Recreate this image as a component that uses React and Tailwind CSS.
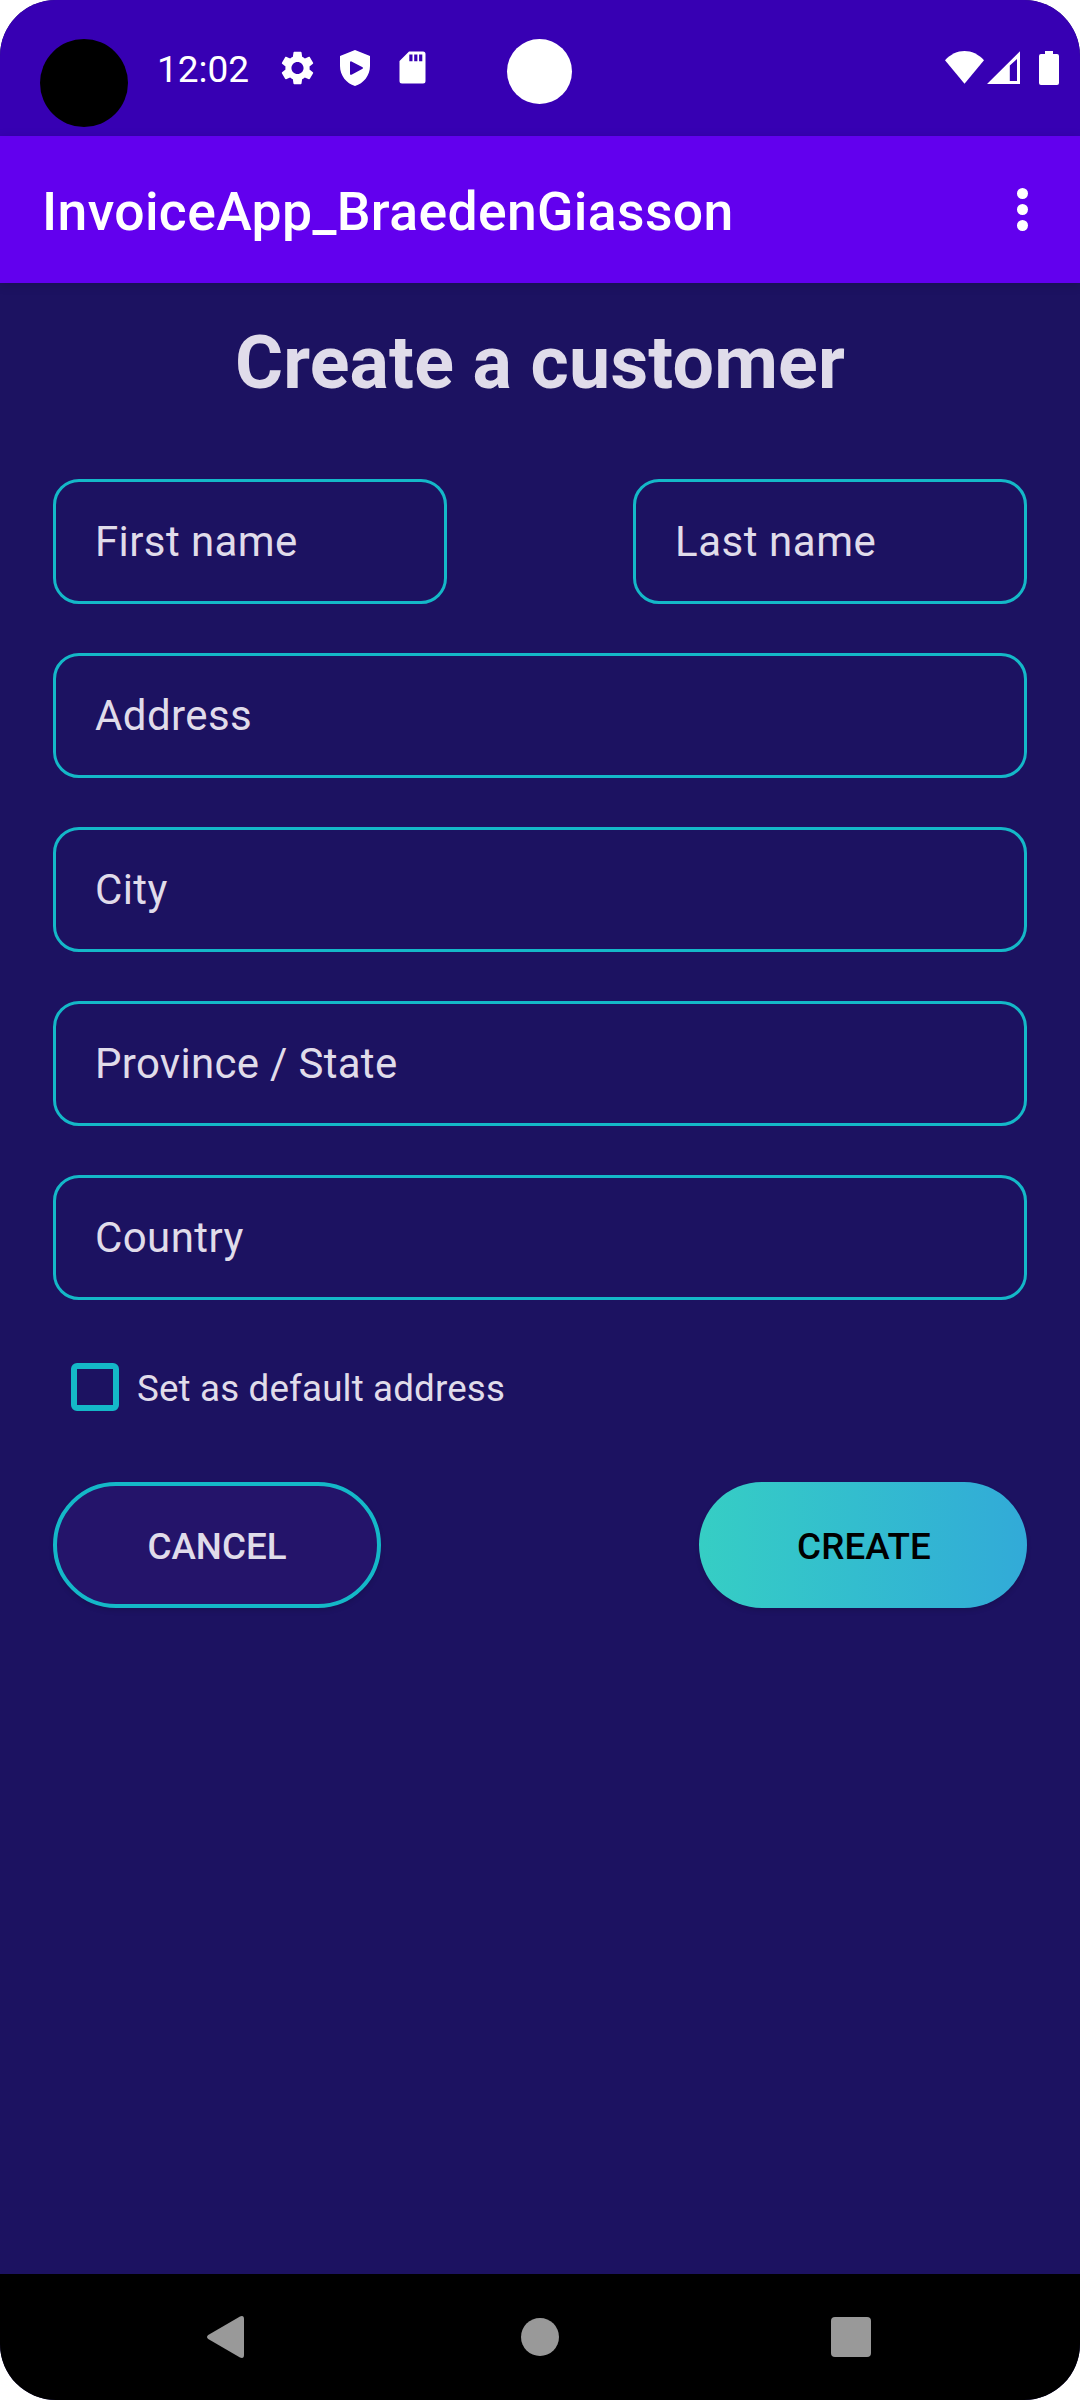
import React from "react";

function Field({ label, className }) {
  return (
    <input
      type="text"
      placeholder={label}
      aria-label={label}
      className={`h-[125px] rounded-[26px] border-3 border-[#14b8c8] bg-transparent px-[39px] text-[42px] text-[#e0dcea] placeholder:text-[#e0dcea] placeholder:opacity-100 outline-none ${className}`}
    />
  );
}

function StatusBar() {
  return (
    <header className="relative flex h-[136px] shrink-0 items-start bg-[#3700b3] text-white">
      <div className="mt-[39px] ml-10 size-[88px] rounded-full bg-black" />
      <span className="mt-[47px] ml-[29px] w-[123.5px] text-[37px] leading-[45px]">12:02</span>
      <svg className="mt-[51px] h-[34px] w-[33px]" viewBox="2.2 1.9 19.6 20.2" fill="currentColor">
        <path d="M19.14 12.94c.04-.3.06-.61.06-.94 0-.32-.02-.64-.07-.94l2.03-1.58c.18-.14.23-.41.12-.61l-1.92-3.32c-.12-.22-.37-.29-.59-.22l-2.39.96c-.5-.38-1.03-.7-1.62-.94l-.36-2.54c-.04-.24-.24-.41-.48-.41h-3.84c-.24 0-.43.17-.47.41l-.36 2.54c-.59.24-1.13.57-1.62.94l-2.39-.96c-.22-.08-.47 0-.59.22L2.74 8.87c-.12.21-.08.47.12.61l2.03 1.58c-.05.3-.09.63-.09.94s.02.64.07.94l-2.03 1.58c-.18.14-.23.41-.12.61l1.92 3.32c.12.22.37.29.59.22l2.39-.96c.5.38 1.03.7 1.62.94l.36 2.54c.05.24.24.41.48.41h3.84c.24 0 .44-.17.47-.41l.36-2.54c.59-.24 1.13-.56 1.62-.94l2.39.96c.22.08.47 0 .59-.22l1.92-3.32c.12-.22.07-.47-.12-.61l-2.01-1.58zM12 15.6c-1.98 0-3.6-1.62-3.6-3.6s1.62-3.6 3.6-3.6 3.6 1.62 3.6 3.6-1.62 3.6-3.6 3.6z" />
      </svg>
      <svg className="mt-[50px] ml-[26px] h-9 w-[30px]" viewBox="0 0 30 36" fill="currentColor" fillRule="evenodd">
        <path d="M15 0 30 6V16C30 25.5 23.5 33.5 15 36 6.500 33.500 0 25.500 0 16V6ZM10 12.2V24Q10.300 25.200 11.500 24.700L22.600 18.700Q23.400 18 22.600 17.300L11.500 11.400Q10.300 11 10 12.200Z" />
      </svg>
      <svg className="mt-[51px] ml-[29.500px] h-[33px] w-[27px]" viewBox="0 0 27 33" fill="currentColor" fillRule="evenodd">
        <path d="M10 .5H24Q26.500 .5 26.500 3V30Q26.500 32.500 24 32.500H3Q.5 32.500 .5 30V10ZM10.300 3.500V10.300H13.500V3.500ZM15.200 3.500V10.300H18.400V3.500ZM20.100 3.500V10.300H23.300V3.500Z" />
      </svg>
      <div className="mt-[39px] ml-[81px] size-[65px] rounded-full bg-white" />
      <svg className="mt-[51px] mr-[3px] ml-auto h-[33px] w-[39px]" viewBox="0 0 39 33" fill="currentColor">
        <path d="M0 9.300C11-3.100 28-3.100 39 9.300L19.500 32.700Z" />
      </svg>
      <svg className="mt-[51px] h-[33px] w-[33px]" viewBox="0 0 33 33" fill="currentColor" fillRule="evenodd">
        <path d="M0 33 33 .3V33ZM22.800 14.500V30H30V8Z" />
      </svg>
      <svg className="mt-[51px] mr-[21px] ml-[19px] h-[34px] w-5" viewBox="0 0 20 34" fill="currentColor">
        <path d="M6 0H14V3H18Q20 3 20 5V32Q20 34 18 34H2Q0 34 0 32V5Q0 3 2 3H6Z" />
      </svg>
    </header>
  );
}

function AppBar() {
  return (
    <div className="z-10 flex h-[147px] shrink-0 items-center justify-between bg-[#6200ee] pr-[52px] pl-[42px] text-white shadow-[0_2px_10px_rgba(0,0,0,0.15)]">
      <h1 className="pt-[4px] text-[53.5px] leading-[62px] font-medium tracking-[0.36px]">InvoiceApp_BraedenGiasson</h1>
      <button type="button" aria-label="More options" className="flex flex-col gap-[5px]">
        <span className="size-[11px] rounded-full bg-white" />
        <span className="size-[11px] rounded-full bg-white" />
        <span className="size-[11px] rounded-full bg-white" />
      </button>
    </div>
  );
}

function NavigationBar() {
  return (
    <nav className="flex h-[126px] shrink-0 items-center bg-black pl-[207px] text-[#999999]">
      <svg className="h-[42px] w-[37px]" viewBox="0 0 37 42" fill="currentColor">
        <path d="M1.200 19 33 .5Q37-1 37 3V39Q37 43 33 41.500L1.200 23Q-1.200 21 1.200 19Z" />
      </svg>
      <span className="ml-[277px] size-[38px] rounded-full bg-current" />
      <span className="ml-[272px] size-10 rounded-[4px] bg-current" />
    </nav>
  );
}

export default function App() {
  return (
    <div className="bg-white">
      <div className="flex h-[2400px] w-[1080px] flex-col overflow-hidden rounded-[56px] bg-[#1c1261] font-['Roboto',sans-serif]">
        <StatusBar />
        <AppBar />
        <main className="flex flex-1 flex-col px-[53px] pt-[37px]">
          <h2 className="text-center text-[73.5px] leading-[86px] font-bold text-[#e0dcea] tracking-[0.2px]">Create a customer</h2>
          <form className="mt-[73px] flex flex-col">
            <div className="flex flex-col gap-[49px]">
              <div className="flex justify-between">
                <Field label="First name" className="w-[394px] tracking-[0.4px]" />
                <Field label="Last name" className="w-[394px] tracking-[0.55px]" />
              </div>
              <Field label="Address" className="w-full tracking-[0.4px]" />
              <Field label="City" className="w-full tracking-[0.4px]" />
              <Field label="Province / State" className="w-full tracking-[0.3px]" />
              <Field label="Country" className="w-full tracking-[0.4px]" />
            </div>
            <label className="mt-[63px] ml-[18px] flex h-12 items-center gap-[18px] text-[36.75px] leading-[44px] tracking-[0.15px] text-[#e0dcea]">
              <input type="checkbox" className="size-12 appearance-none rounded-[6px] border-6 border-[#14b8c8]" />
              <span className="pt-[4px]">Set as default address</span>
            </label>
            <div className="mt-[71px] flex justify-between">
              <button
                type="button"
                className="flex h-[126px] w-[328px] items-center justify-center rounded-full border-4 border-[#14b8c8] bg-[#24146a] pt-[3px] text-[36.75px] font-medium text-[#e0dcea] shadow-[0_3px_5px_rgba(0,0,0,0.12)]"
              >
                CANCEL
              </button>
              <button
                type="button"
                className="flex h-[126px] w-[328px] items-center justify-center rounded-full bg-linear-to-r from-[#36cec4] to-[#32aad8] pt-[3px] pl-[2px] text-[36.75px] font-medium tracking-[0.1px] text-black shadow-[0_3px_5px_rgba(0,0,0,0.12)]"
              >
                CREATE
              </button>
            </div>
          </form>
        </main>
        <NavigationBar />
      </div>
    </div>
  );
}
